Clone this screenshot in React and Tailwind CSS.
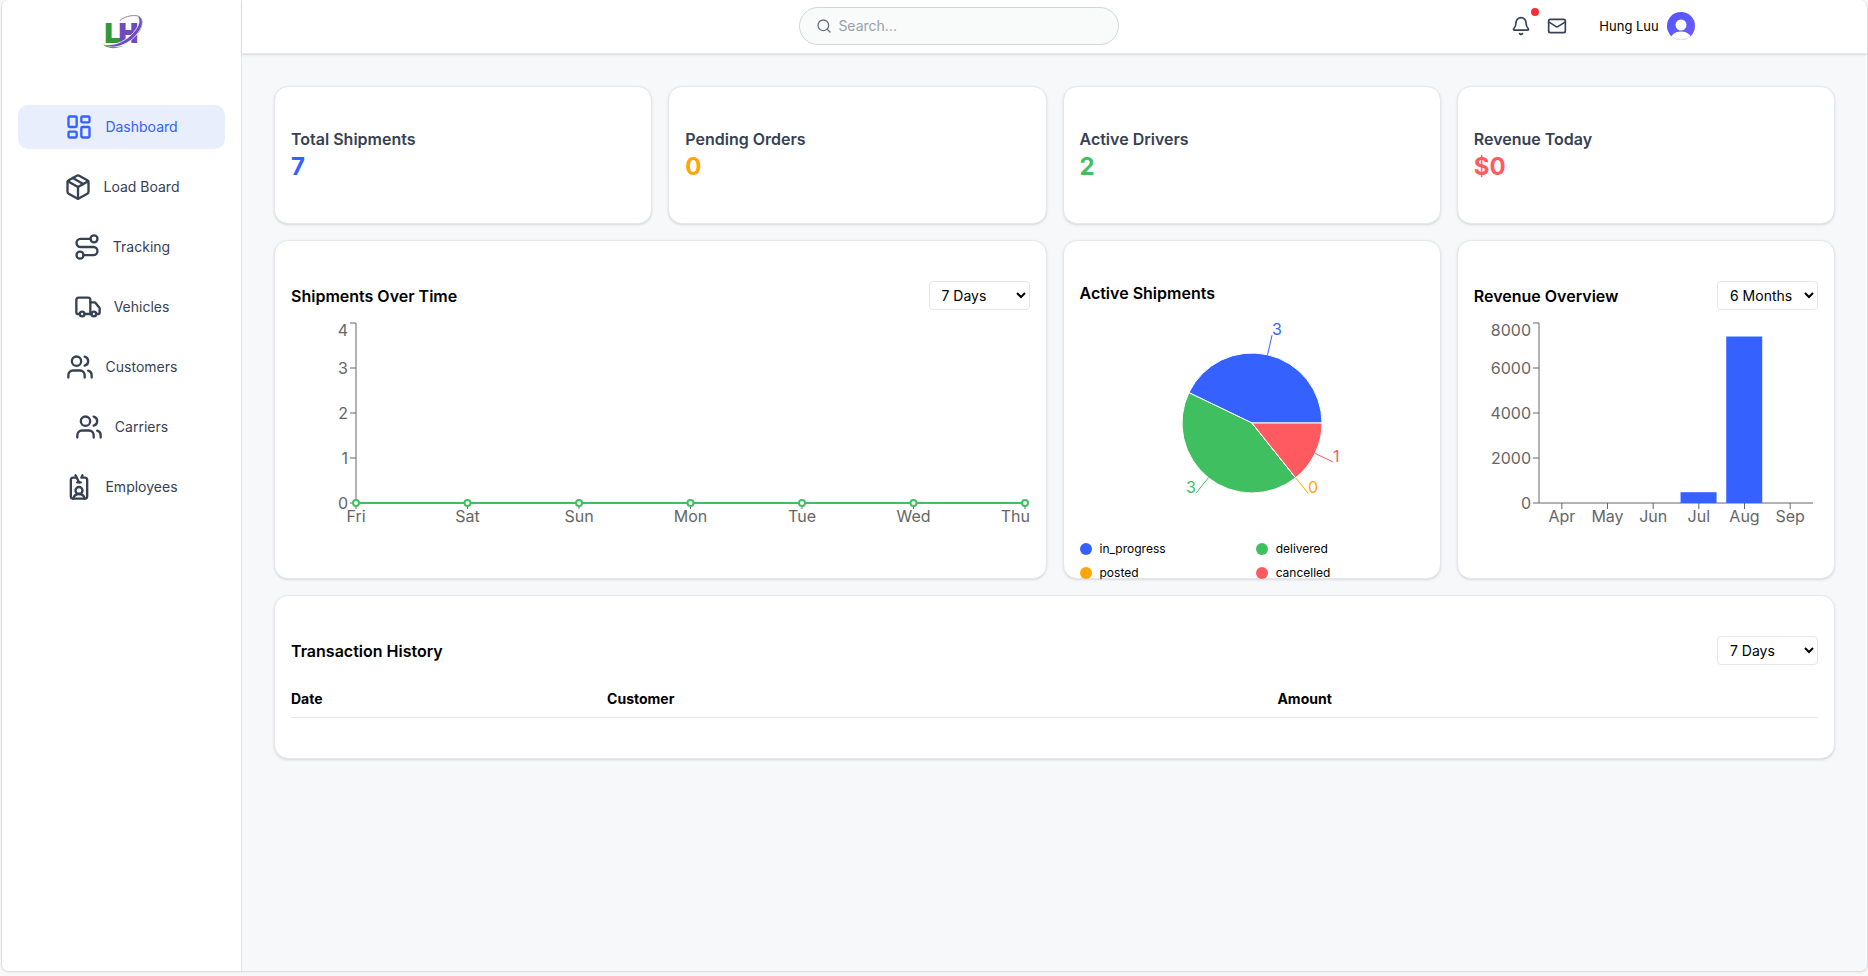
import { useLayoutEffect, useRef, useState } from "react";
import {
  Bell,
  IdCardLanyard,
  LayoutDashboard,
  Mail,
  Package,
  Route,
  Search,
  Truck,
  Users,
} from "lucide-react";

const BLUE = "#3461ff";
const GREEN = "#40bf60";
const ORANGE = "#ffa50b";
const RED = "#ff5a5f";

const NAV = [
  { label: "Dashboard", icon: LayoutDashboard, active: true },
  { label: "Load Board", icon: Package },
  { label: "Tracking", icon: Route },
  { label: "Vehicles", icon: Truck },
  { label: "Customers", icon: Users },
  { label: "Carriers", icon: Users },
  { label: "Employees", icon: IdCardLanyard },
];

const STATS = [
  { label: "Total Shipments", value: "7", color: "text-[#3461ff]" },
  { label: "Pending Orders", value: "0", color: "text-[#ffa50b]" },
  { label: "Active Drivers", value: "2", color: "text-[#40bf60]" },
  { label: "Revenue Today", value: "$0", color: "text-[#ff5a5f]" },
];

const STATUSES = [
  { name: "in_progress", value: 3, color: BLUE, dot: "bg-[#3461ff]" },
  { name: "delivered", value: 3, color: GREEN, dot: "bg-[#40bf60]" },
  { name: "posted", value: 0, color: ORANGE, dot: "bg-[#ffa50b]" },
  { name: "cancelled", value: 1, color: RED, dot: "bg-[#ff5a5f]" },
];

const SHIPMENTS = [
  { day: "Fri", count: 0 },
  { day: "Sat", count: 0 },
  { day: "Sun", count: 0 },
  { day: "Mon", count: 0 },
  { day: "Tue", count: 0 },
  { day: "Wed", count: 0 },
  { day: "Thu", count: 0 },
];

const REVENUE = [
  { month: "Apr", total: 0 },
  { month: "May", total: 0 },
  { month: "Jun", total: 0 },
  { month: "Jul", total: 480 },
  { month: "Aug", total: 7400 },
  { month: "Sep", total: 0 },
];

const CHART_HEIGHT = 220;
const PLOT = { left: 65, top: 5, bottom: 185, right: 5 };

function useWidth(initial) {
  const ref = useRef(null);
  const [width, setWidth] = useState(initial);
  useLayoutEffect(() => {
    const measure = () => setWidth(Math.round(ref.current.clientWidth));
    measure();
    const observer = new ResizeObserver(measure);
    observer.observe(ref.current);
    return () => observer.disconnect();
  }, []);
  return [ref, width];
}

function YAxis({ ticks }) {
  const max = ticks[ticks.length - 1];
  return (
    <g>
      <line x1={PLOT.left} x2={PLOT.left} y1={PLOT.top} y2={PLOT.bottom} stroke="#666" />
      {ticks.map((tick) => {
        const y = PLOT.bottom - (tick / max) * (PLOT.bottom - PLOT.top);
        return (
          <g key={tick}>
            <line x1={PLOT.left - 6} x2={PLOT.left} y1={y} y2={y} stroke="#666" />
            <text x={PLOT.left - 8} y={Math.max(y + 6, 18)} textAnchor="end" fill="#666">
              {tick}
            </text>
          </g>
        );
      })}
    </g>
  );
}

function LineChart() {
  const [ref, width] = useWidth(738);
  const right = width - PLOT.right;
  const step = (right - PLOT.left) / (SHIPMENTS.length - 1);
  const points = SHIPMENTS.map((d, i) => ({
    ...d,
    x: PLOT.left + i * step,
    y: PLOT.bottom - (d.count / 4) * (PLOT.bottom - PLOT.top),
  }));
  return (
    <div ref={ref} className="w-full">
      <svg width={width} height={CHART_HEIGHT} className="block text-base" role="img" aria-label="Shipments per day">
        <line x1={PLOT.left} x2={right} y1={PLOT.bottom} y2={PLOT.bottom} stroke="#666" />
        {points.map((p, i) => {
          const last = i === points.length - 1;
          return (
            <g key={p.day}>
              <line x1={p.x} x2={p.x} y1={PLOT.bottom} y2={PLOT.bottom + 6} stroke="#666" />
              <text x={last ? width : p.x} y={PLOT.bottom + 19} textAnchor={last ? "end" : "middle"} fill="#666">
                {p.day}
              </text>
            </g>
          );
        })}
        <YAxis ticks={[0, 1, 2, 3, 4]} />
        <polyline points={points.map((p) => `${p.x},${p.y}`).join(" ")} fill="none" stroke={GREEN} strokeWidth="2" />
        {points.map((p) => (
          <circle key={p.day} cx={p.x} cy={p.y} r="3" fill="#fff" stroke={GREEN} strokeWidth="2" />
        ))}
      </svg>
    </div>
  );
}

function BarChart() {
  const [ref, width] = useWidth(344);
  const right = width - PLOT.right;
  const band = (right - PLOT.left) / REVENUE.length;
  const barWidth = Math.floor(band * 0.8);
  return (
    <div ref={ref} className="w-full">
      <svg width={width} height={CHART_HEIGHT} className="block text-base" role="img" aria-label="Revenue per month">
        <line x1={PLOT.left} x2={right} y1={PLOT.bottom} y2={PLOT.bottom} stroke="#666" />
        {REVENUE.map((d, i) => {
          const center = PLOT.left + (i + 0.5) * band;
          const height = (d.total / 8000) * (PLOT.bottom - PLOT.top);
          return (
            <g key={d.month}>
              <line x1={center} x2={center} y1={PLOT.bottom} y2={PLOT.bottom + 6} stroke="#666" />
              <text x={center} y={PLOT.bottom + 19} textAnchor="middle" fill="#666">
                {d.month}
              </text>
              <rect x={center - band * 0.4} y={PLOT.bottom - height} width={barWidth} height={height} fill={BLUE} />
            </g>
          );
        })}
        <YAxis ticks={[0, 2000, 4000, 6000, 8000]} />
      </svg>
    </div>
  );
}

function PieChart() {
  const [ref, width] = useWidth(344);
  const cx = width / 2;
  const cy = CHART_HEIGHT / 2;
  const total = STATUSES.reduce((sum, s) => sum + s.value, 0);
  const at = (turn, r) => [cx + r * Math.cos(turn * 2 * Math.PI), cy - r * Math.sin(turn * 2 * Math.PI)];
  let start = 0;
  const slices = STATUSES.map((s) => {
    const end = start + s.value / total;
    const slice = { ...s, from: at(start, 70), to: at(end, 70), inner: at((start + end) / 2, 70), outer: at((start + end) / 2, 90) };
    start = end;
    return slice;
  });
  return (
    <div ref={ref} className="w-full">
      <svg width={width} height={CHART_HEIGHT} className="block text-base" role="img" aria-label="Shipments by status">
        {slices.map((s) => (
          <path
            key={s.name}
            d={`M${s.from.join(",")} A70,70 0 0 0 ${s.to.join(",")} L${cx},${cy} Z`}
            fill={s.color}
            stroke="#fff"
          />
        ))}
        {slices.map((s) => (
          <g key={s.name}>
            <line x1={s.inner[0]} y1={s.inner[1]} x2={s.outer[0]} y2={s.outer[1]} stroke={s.color} />
            <text x={s.outer[0]} y={s.outer[1]} textAnchor={s.outer[0] > cx ? "start" : "end"} fill={s.color}>
              {s.value}
            </text>
          </g>
        ))}
      </svg>
    </div>
  );
}

function Card({ className = "", children }) {
  return (
    <section className={`rounded-[14px] border border-gray-200 bg-white px-4 py-10 shadow-sm ${className}`}>
      {children}
    </section>
  );
}

function RangeSelect({ label, value, options }) {
  return (
    <select
      aria-label={label}
      defaultValue={value}
      className="h-[29px] w-[101px] rounded border border-gray-200 bg-white px-2 text-sm text-black"
    >
      {options.map((o) => (
        <option key={o}>{o}</option>
      ))}
    </select>
  );
}

function Logo() {
  return (
    <svg width="44" height="38" viewBox="0 0 44 38" role="img" aria-label="LH">
      <g fontFamily="'Liberation Sans', sans-serif" fontWeight="700" fontSize="26" strokeWidth="2">
        <text x="5" y="30" fill="#2f9a3b" stroke="#2f9a3b">
          L
        </text>
        <text x="19" y="30" fill="#6f4bbd" stroke="#6f4bbd">
          H
        </text>
      </g>
      <path
        d="M3 32.3C9 37.500 24 35.500 34.500 25C44 15 45.500 5 36 3.300C40 6 40 11 36.500 16.500C29 28 15 35 3 32.300Z"
        fill="#6f4bbd"
        stroke="#fff"
        strokeWidth="0.8"
      />
      <path d="M3 32.300C6 36.500 15 37.500 23 34C16 35.500 8 35.500 3 32.300Z" fill="#3fae4c" />
      <path d="M19.800 8.700C24 5 31 2.800 37 3.800" fill="none" stroke="#8c84a8" strokeWidth="1" />
      <path d="M37 3.500C43.500 5.500 43.500 13 38.500 21" fill="none" stroke="#4fa463" strokeWidth="0.600" />
    </svg>
  );
}

function Avatar() {
  return (
    <svg width="28" height="28" viewBox="0 0 28 28" role="img" aria-label="Profile picture">
      <defs>
        <clipPath id="avatar-clip">
          <circle cx="14" cy="14" r="14" />
        </clipPath>
        <linearGradient id="avatar-fill" x1="0" y1="0" x2="1" y2="1">
          <stop offset="0" stopColor="#5155ff" />
          <stop offset="1" stopColor="#6c5cff" />
        </linearGradient>
      </defs>
      <g clipPath="url(#avatar-clip)">
        <rect width="28" height="28" fill="url(#avatar-fill)" />
        <circle cx="14" cy="13" r="5.500" fill="#fff" />
        <ellipse cx="14" cy="28" rx="11" ry="8.500" fill="#fff" />
      </g>
      <path d="M8 26.500A14 14 0 0 0 20 26.500" fill="none" stroke="#dcdcdc" strokeWidth="0.800" />
    </svg>
  );
}

export default function App() {
  return (
    <div className="flex min-h-screen flex-col bg-[#f8f8f8] pb-1 pl-px font-[Inter,sans-serif] text-sm text-black">
      <div className="flex grow overflow-hidden rounded-lg border border-t-0 border-[#dedfe1] bg-[#f7f8fa] shadow-xs">
        <aside className="w-60 shrink-0 border-r border-gray-200 bg-white px-4">
          <a href="#home" className="flex justify-center pt-3">
            <Logo />
          </a>
          <nav className="mt-[55px] flex flex-col gap-4">
            {NAV.map(({ label, icon: Icon, active }) => (
              <a
                key={label}
                href={`#${label.toLowerCase().replace(" ", "-")}`}
                aria-current={active ? "page" : undefined}
                className={`flex h-11 items-center justify-center gap-3 rounded-[10px] ${
                  active ? "bg-[#e8eefc] text-[#3461ff]" : "text-[#364153]"
                }`}
              >
                <Icon size={28} />
                <span>{label}</span>
              </a>
            ))}
          </nav>
        </aside>

        <div className="flex min-w-0 grow flex-col">
          <header className="flex h-[54px] items-center justify-between border-b border-gray-200 bg-white pr-[10.6%] pb-px pl-[34.3%] shadow-sm">
            <label className="flex h-[38px] w-80 items-center gap-1.5 rounded-full border border-gray-300 bg-[#f9fafa] px-4">
              <Search size={16} className="shrink-0 text-[#6a7282]" />
              <input
                type="search"
                aria-label="Search"
                placeholder="Search..."
                className="min-w-0 grow bg-transparent outline-none placeholder:text-[#99a1af]"
              />
            </label>
            <div className="flex items-center gap-8">
              <div className="flex items-center gap-4 text-[#364153]">
                <button type="button" aria-label="Notifications" className="relative">
                  <Bell size={20} />
                  <span className="absolute -top-2 -right-2 size-2 rounded-full bg-[#fb2c36]" />
                </button>
                <button type="button" aria-label="Messages">
                  <Mail size={20} />
                </button>
              </div>
              <button type="button" className="flex items-center gap-2 text-[13px]">
                Hung Luu
                <Avatar />
              </button>
            </div>
          </header>

          <main className="grid grid-cols-4 gap-4 p-8">
            {STATS.map((s) => (
              <Card key={s.label}>
                <h2 className="text-base font-semibold text-[#364153]">{s.label}</h2>
                <p className={`text-2xl font-bold ${s.color}`}>{s.value}</p>
              </Card>
            ))}

            <Card className="col-span-2">
              <div className="mb-2 flex items-center justify-between">
                <h2 className="text-base font-semibold">Shipments Over Time</h2>
                <RangeSelect label="Shipments period" value="7 Days" options={["7 Days", "30 Days"]} />
              </div>
              <LineChart />
            </Card>

            <Card className="h-0 min-h-full">
              <h2 className="mb-2 text-base font-semibold">Active Shipments</h2>
              <PieChart />
              <ul className="mt-2 grid grid-cols-2 gap-2 text-xs">
                {STATUSES.map((s) => (
                  <li key={s.name} className="flex items-center gap-2">
                    <span className={`size-3 rounded-full ${s.dot}`} />
                    {s.name}
                  </li>
                ))}
              </ul>
            </Card>

            <Card>
              <div className="mb-2 flex items-center justify-between">
                <h2 className="text-base font-semibold">Revenue Overview</h2>
                <RangeSelect label="Revenue period" value="6 Months" options={["6 Months", "1 Year"]} />
              </div>
              <BarChart />
            </Card>

            <Card className="col-span-4">
              <div className="mb-4 flex items-center justify-between">
                <h2 className="text-base font-semibold">Transaction History</h2>
                <RangeSelect label="Transactions period" value="7 Days" options={["7 Days", "30 Days"]} />
              </div>
              <table className="w-full text-left">
                <thead>
                  <tr className="border-b border-gray-200">
                    <th className="w-[20.7%] py-2 font-bold">Date</th>
                    <th className="w-[43.9%] py-2 font-bold">Customer</th>
                    <th className="py-2 font-bold">Amount</th>
                  </tr>
                </thead>
                <tbody />
              </table>
            </Card>
          </main>
        </div>
      </div>
    </div>
  );
}
